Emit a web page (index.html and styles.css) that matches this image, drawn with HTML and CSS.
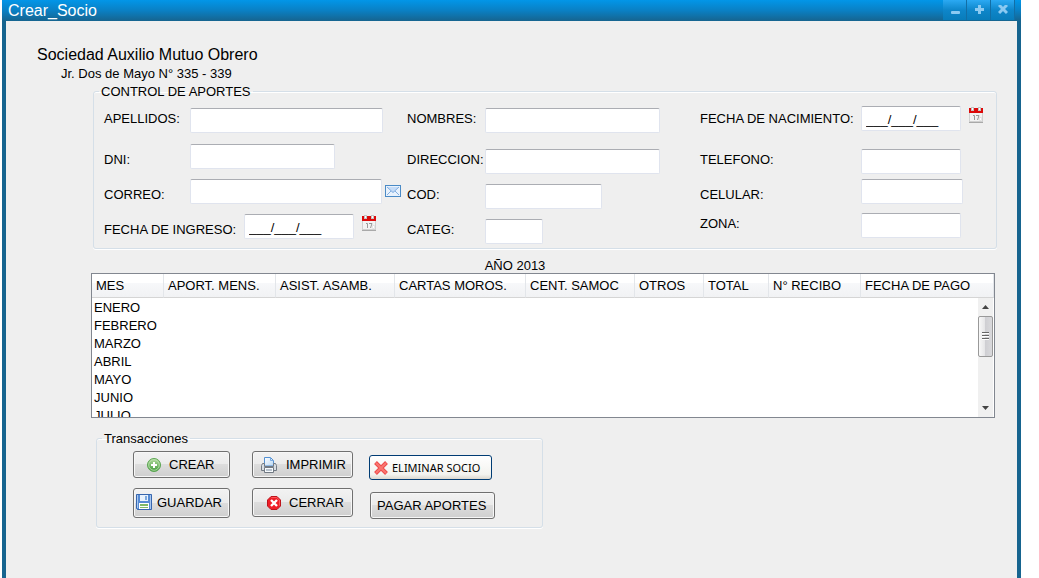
FILE: index.html
```html
<!DOCTYPE html>
<html lang="es">
<head>
<meta charset="utf-8">
<meta name="viewport" content="width=device-width, initial-scale=1">
<title>Crear_Socio</title>
<link rel="stylesheet" href="styles.css">
</head>
<body>
<svg class="defs" aria-hidden="true">
  <defs>
    <linearGradient id="green" x1="0" y1="0" x2="0" y2="1"><stop offset="0" stop-color="#b5dca0"/><stop offset="1" stop-color="#3f9b3a"/></linearGradient>
    <linearGradient id="paper" x1="0" y1="0" x2="1" y2="1"><stop offset="0" stop-color="#fff"/><stop offset="1" stop-color="#b9d8f5"/></linearGradient>
    <symbol id="calendar" viewBox="0 0 14 16">
      <path fill="#f3f3f3" d="M0 5h14v10H0z"/>
      <path fill="#a9a9a9" d="M0 15h14v1H0z"/>
      <path fill="#d0d0d0" d="M0 5h1v10H0zM13 5h1v10h-1zM1 14h12v1H1z"/>
      <path fill="#dc0a0a" d="M0 1h14v5H0z"/>
      <path fill="#c4c4c4" d="M2 0h3v4H2zM9 0h3v4H9z"/>
      <path fill="#fff" d="M3 1h1v2H3zM10 1h1v2h-1z"/>
      <path fill="none" stroke="#999" d="M4 8.500h1.500V13M7 8.500h3L8.500 13"/>
      <circle cx="11.500" cy="12" r="1.500" fill="#fff" stroke="#ccc" stroke-width=".6"/>
    </symbol>
  </defs>
</svg>
<main class="window">
  <header class="titlebar">
    <h1 class="titlebar__title">Crear_Socio</h1>
    <div class="titlebar__controls">
      <button class="winbtn" type="button" aria-label="Minimizar"><svg width="10" height="10" viewBox="0 0 10 10"><rect x="1" y="6" width="9" height="3" rx="1" fill="#8bcaf2"/></svg></button>
      <button class="winbtn" type="button" aria-label="Maximizar"><svg width="10" height="10" viewBox="0 0 10 10"><path fill="#8bcaf2" d="M4 0h3v3h3v3H7v3H4V6H1V3h3z"/></svg></button>
      <button class="winbtn" type="button" aria-label="Cerrar ventana"><svg width="10" height="10" viewBox="0 0 10 10"><path stroke="#8bcaf2" stroke-width="3" d="M1 0l8 8M9 0L1 8"/></svg></button>
    </div>
  </header>

  <form class="content">
    <h2 class="org">Sociedad Auxilio Mutuo Obrero</h2>
    <p class="address">Jr. Dos de Mayo N° 335 - 339</p>

    <fieldset class="box box--control">
      <legend>CONTROL DE APORTES</legend>
      <div class="groups">
        <div class="group group--person">
          <div class="field"><label class="high" for="apellidos">APELLIDOS:</label><input class="text w-full" id="apellidos" type="text"></div>
          <div class="field"><label class="low" for="dni">DNI:</label><input class="text w-dni" id="dni" type="text"></div>
          <div class="field"><label class="low" for="correo">CORREO:</label><input class="text w-mail" id="correo" type="text">
            <svg class="mail" width="16" height="12" viewBox="0 0 16 12"><rect x=".5" y=".5" width="15" height="11" fill="#e8f2fd" stroke="#4a8ac6"/><path fill="#c5dcf8" d="M2 2h12L8 8z"/><path fill="none" stroke="#82aee0" d="M2 2l6 5.500L14 2M2 10l4-4M14 10l-4-4"/></svg>
          </div>
          <div class="field"><label class="low long" for="ingreso">FECHA DE INGRESO:</label><input class="text w-date" id="ingreso" type="text" value="___/___/___">
            <button class="pick" type="button" aria-label="Elegir fecha de ingreso"><svg width="14" height="16"><use href="#calendar"/></svg></button>
          </div>
        </div>
        <div class="group group--place">
          <div class="field"><label class="high" for="nombres">NOMBRES:</label><input class="text w-name" id="nombres" type="text"></div>
          <div class="field"><label class="high" for="direccion">DIRECCION:</label><input class="text w-name" id="direccion" type="text"></div>
          <div class="field"><label class="high" for="cod">COD:</label><input class="text w-code" id="cod" type="text"></div>
          <div class="field"><label class="high" for="categ">CATEG:</label><input class="text w-categ" id="categ" type="text"></div>
        </div>
        <div class="group group--contact">
          <div class="field"><label for="nacimiento">FECHA DE NACIMIENTO:</label><input class="text w-short" id="nacimiento" type="text" value="___/___/___">
            <button class="pick" type="button" aria-label="Elegir fecha de nacimiento"><svg width="14" height="16"><use href="#calendar"/></svg></button>
          </div>
          <div class="field"><label class="high" for="telefono">TELEFONO:</label><input class="text w-short" id="telefono" type="text"></div>
          <div class="field"><label class="low" for="celular">CELULAR:</label><input class="text w-cell" id="celular" type="text"></div>
          <div class="field"><label class="high" for="zona">ZONA:</label><input class="text w-short" id="zona" type="text"></div>
        </div>
      </div>
    </fieldset>

    <p class="year" id="year">AÑO 2013</p>
    <div class="list">
      <table aria-labelledby="year">
        <colgroup><col class="c-mes"><col class="c-aport"><col class="c-asist"><col class="c-cartas"><col class="c-cent"><col class="c-otros"><col class="c-total"><col class="c-recibo"><col class="c-fecha"></colgroup>
        <thead>
          <tr><th>MES</th><th>APORT. MENS.</th><th>ASIST. ASAMB.</th><th>CARTAS MOROS.</th><th>CENT. SAMOC</th><th>OTROS</th><th>TOTAL</th><th>N° RECIBO</th><th>FECHA DE PAGO</th></tr>
        </thead>
        <tbody>
          <tr><td>ENERO</td><td></td><td></td><td></td><td></td><td></td><td></td><td></td><td></td></tr>
          <tr><td>FEBRERO</td><td></td><td></td><td></td><td></td><td></td><td></td><td></td><td></td></tr>
          <tr><td>MARZO</td><td></td><td></td><td></td><td></td><td></td><td></td><td></td><td></td></tr>
          <tr><td>ABRIL</td><td></td><td></td><td></td><td></td><td></td><td></td><td></td><td></td></tr>
          <tr><td>MAYO</td><td></td><td></td><td></td><td></td><td></td><td></td><td></td><td></td></tr>
          <tr><td>JUNIO</td><td></td><td></td><td></td><td></td><td></td><td></td><td></td><td></td></tr>
          <tr><td>JULIO</td><td></td><td></td><td></td><td></td><td></td><td></td><td></td><td></td></tr>
        </tbody>
      </table>
      <div class="scroll" aria-hidden="true">
        <span class="scroll__arrow"><svg width="7" height="4" viewBox="0 0 7 4"><path fill="#444" d="M0 4l3.500-4L7 4z"/></svg></span>
        <span class="scroll__thumb"><svg width="7" height="9" viewBox="0 0 7 9"><path fill="#666" d="M0 0h7v1H0zM0 3h7v1H0zM0 6h7v1H0z"/><path fill="#fff" d="M0 1h7v1H0zM0 4h7v1H0zM0 7h7v1H0z"/></svg></span>
        <span class="scroll__arrow scroll__arrow--down"><svg width="7" height="4" viewBox="0 0 7 4"><path fill="#444" d="M0 0h7L3.500 4z"/></svg></span>
      </div>
    </div>

    <fieldset class="box box--actions">
      <legend>Transacciones</legend>
      <div class="actions">
        <div class="actions__col">
          <button class="btn btn--crear" type="button"><svg width="14" height="14" viewBox="0 0 14 14"><circle cx="7" cy="7" r="6.500" fill="url(#green)" stroke="#5ba552"/><circle cx="7" cy="7" r="5.300" fill="none" stroke="#bfe2b2" stroke-width=".8"/><path fill="#fff" d="M6 4h2v2h2v2H8v2H6V8H4V6h2z"/></svg>CREAR</button>
          <button class="btn btn--guardar" type="button"><svg width="16" height="16" viewBox="0 0 16 16"><path fill="#568bd4" stroke="#3766ae" d="M.5.500h15v15h-14l-1-1z"/><path fill="#e9f2fc" d="M4 1h8v6H4z"/><path fill="#7da9df" d="M9 2h2v4H9z"/><path fill="#a8c7ef" d="M1 1h1v13H1zM14 1h1v14h-1z"/><path fill="#fff" d="M3 9h10v6H3z"/><path fill="#80b967" d="M4 10h8v2H4zM4 13h8v1H4z"/></svg>GUARDAR</button>
        </div>
        <div class="actions__col">
          <button class="btn btn--imprimir" type="button"><svg width="16" height="16" viewBox="0 0 16 16"><path fill="url(#paper)" stroke="#5390d2" d="M3.500 9V.5h6l3 3V9z"/><path fill="none" stroke="#76a8df" d="M9.500.5v3h3"/><path fill="#d8dde2" stroke="#727a84" d="M1.500 6.500h2v3h9v-3h2l1 2v5h-15v-5z"/><path fill="#f7fafc" stroke="#727a84" d="M3.500 10.500h9v5h-9z"/><path fill="#b7c2cd" d="M5 12h6v2H5z"/></svg>IMPRIMIR</button>
          <button class="btn btn--cerrar" type="button"><svg width="14" height="14" viewBox="0 0 14 14"><path fill="#ef1e27" stroke="#bd141c" d="M4 .5h6L13.500 4v6L10 13.500H4L.5 10V4z"/><path stroke="#ff7070" stroke-width=".7" fill="none" d="M4.300 1.500h5.400L12.500 4.300v5.400"/><path stroke="#fff" stroke-width="2.400" d="M4 4l6 6M10 4l-6 6"/></svg>CERRAR</button>
        </div>
        <div class="actions__col actions__col--last">
          <button class="btn btn--eliminar" type="button"><svg width="14" height="14" viewBox="0 0 14 14"><path stroke="#ee4a4a" stroke-width="4" d="M1.500 1.500l11 11M12.500 1.500l-11 11"/><path stroke="#fa7770" stroke-width="2" d="M2 2l10 10M12 2L2 12"/></svg>ELIMINAR SOCIO</button>
          <button class="btn btn--pagar" type="button">PAGAR APORTES</button>
        </div>
      </div>
    </fieldset>
  </form>
</main>
</body>
</html>
```
FILE: styles.css
```css
* { box-sizing: border-box; }

body {
  margin: 0;
  background: #fff;
  color: #000;
  font: 13px/15px "Liberation Sans", Arial, sans-serif;
}

button, input { font: inherit; color: inherit; margin: 0; }
svg { display: block; flex: none; }
.defs { position: absolute; width: 0; height: 0; }

.window {
  display: flex;
  flex-direction: column;
  min-height: 100vh;
  margin: 0 18px 0 2px;
  border: solid #16648f;
  border-width: 0 4px;
  background: #efefef;
}

.titlebar {
  display: flex;
  justify-content: space-between;
  height: 21px;
  margin: 0 -4px;
  padding: 0 6px;
  background: linear-gradient(#0296e8, #0a80c4 50%, #16648f);
  color: #fff;
}
.titlebar__title { margin: 0; font-size: 16px; font-weight: 400; line-height: 21px; }
.titlebar__controls {
  display: flex;
  gap: 1px;
  height: 20px;
  padding-right: 1px;
  background: #126ea5;
}
.winbtn {
  display: flex;
  align-items: center;
  justify-content: center;
  width: 23px;
  padding: 0;
  border: 0;
  background: linear-gradient(#2ba9f3, #0e86ca 50%, #087cba);
}

.content { padding: 25px 20px 0 31px; }
.org { margin: 0; font-size: 16px; font-weight: 400; line-height: 18px; }
.address { margin: 2px 0 3px 24px; }

.box {
  position: relative;
  margin: 0;
  padding: 0;
  min-width: 0;
  border: 1px solid #d5dfe8;
  border-radius: 3px;
  box-shadow: 0 1px 0 #fff, inset 0 1px 0 #fff;
}
.box legend { margin-left: 5px; padding: 0 2px; }
.box--control { margin-left: 56px; }

.groups {
  display: grid;
  grid-template-columns: 303fr 293fr 296fr;
  padding: 7px 0 4px 10px;
}
.group { display: flex; flex-direction: column; }
.group--person { gap: 10px; padding-top: 2px; }
.group--person .field:first-child { margin-bottom: 1px; }
.group--place { gap: 10px; padding-top: 2px; }
.group--place .field:first-child { margin-bottom: 6px; }
.group--contact { gap: 9px; }
.group--contact .field:first-child { margin-bottom: 9px; }
.group--contact .field:nth-child(2) { margin-bottom: -4px; }

.field { display: flex; align-items: center; height: 25px; }
.field label { white-space: nowrap; }
.group--person label { min-width: 86px; }
.group--person .long { min-width: 140px; }
.group--place label { min-width: 78px; }
.group--contact label { min-width: 161px; }
.high { padding-bottom: 5px; }
.low { padding-top: 5px; }

.text {
  height: 25px;
  padding: 1px 4px 0;
  border: 1px solid #e0e4ee;
  border-top-color: #abadb3;
  border-radius: 2px;
  background: #fff;
}
.w-full { width: 193px; }
.w-mail { width: 192px; }
.w-dni { width: 145px; }
.w-date { width: 110px; }
.w-name { width: 175px; }
.w-code { width: 117px; }
.w-categ { width: 58px; }
.w-short { width: 100px; }
.w-cell { width: 102px; }
.mail { margin: 0 0 2px 3px; }
.pick { margin: 0 0 8px 8px; padding: 0; border: 0; background: none; }

.year { margin: 9px 0 0; padding-right: 4px; text-align: center; }

.list {
  position: relative;
  height: 145px;
  margin: 0 2px 0 54px;
  overflow: hidden;
  border: 1px solid #828790;
  background: #fff;
}
.list table { width: 100%; table-layout: fixed; border-collapse: separate; border-spacing: 0; }
.list th {
  height: 24px;
  padding: 0 0 0 4px;
  border-right: 1px solid #e3e6ea;
  border-bottom: 1px solid #d5d5d5;
  background: linear-gradient(#fff 40%, #f7f8fa 41%, #f1f2f4);
  font-weight: 400;
  text-align: left;
  white-space: nowrap;
}
.list td { height: 18px; padding: 0 0 0 2px; }
.c-mes { width: 72px; }
.c-aport { width: 112px; }
.c-asist { width: 119px; }
.c-cartas { width: 131px; }
.c-cent { width: 109px; }
.c-otros { width: 69px; }
.c-total { width: 65px; }
.c-recibo { width: 92px; }

.scroll {
  position: absolute;
  top: 24px;
  right: 1px;
  bottom: 0;
  display: flex;
  flex-direction: column;
  width: 15px;
  background: #f0f0f0;
}
.scroll__arrow { display: flex; align-items: center; justify-content: center; height: 18px; }
.scroll__arrow--down { margin-top: auto; }
.scroll__thumb {
  display: flex;
  align-items: center;
  justify-content: center;
  height: 41px;
  border: 1px solid #999;
  border-radius: 2px;
  background: linear-gradient(90deg, #f8f8f8, #e5e5e7 45%, #cfcfd3 50%, #d9d9dc);
}

.box--actions { width: 447px; margin: 13px 0 0 59px; }
.actions { display: flex; padding: 5px 0 8px 36px; }
.actions__col { display: flex; flex-direction: column; gap: 10px; margin-right: 22px; }
.actions__col:nth-child(2) { margin-right: 16px; }
.actions__col--last { gap: 12px; margin-right: 0; padding-top: 4px; }

.btn {
  display: flex;
  align-items: center;
  height: 27px;
  padding: 0 4px;
  border: 1px solid #707070;
  border-radius: 3px;
  background: linear-gradient(#f2f2f2, #ebebeb 49%, #dddddd 50%, #cfcfcf);
  box-shadow: inset 0 0 0 1px #f7f7f7;
  white-space: nowrap;
}
.btn--crear { width: 97px; padding-left: 13px; gap: 8px; }
.btn--guardar { width: 97px; height: 30px; padding: 0 2px 2px; gap: 5px; }
.btn--imprimir { width: 101px; padding-left: 8px; gap: 9px; }
.btn--cerrar { width: 101px; height: 29px; padding-left: 14px; gap: 8px; }
.btn--eliminar {
  width: 123px;
  height: 25px;
  gap: 4px;
  border-color: #003c74;
  background: linear-gradient(#fff, #f3f3ef 80%, #dcd8cf);
  box-shadow: none;
  font: 11px/13px "Noto Sans", sans-serif;
}
.btn--pagar { width: 125px; margin-left: 1px; padding: 0 6px; }
```
